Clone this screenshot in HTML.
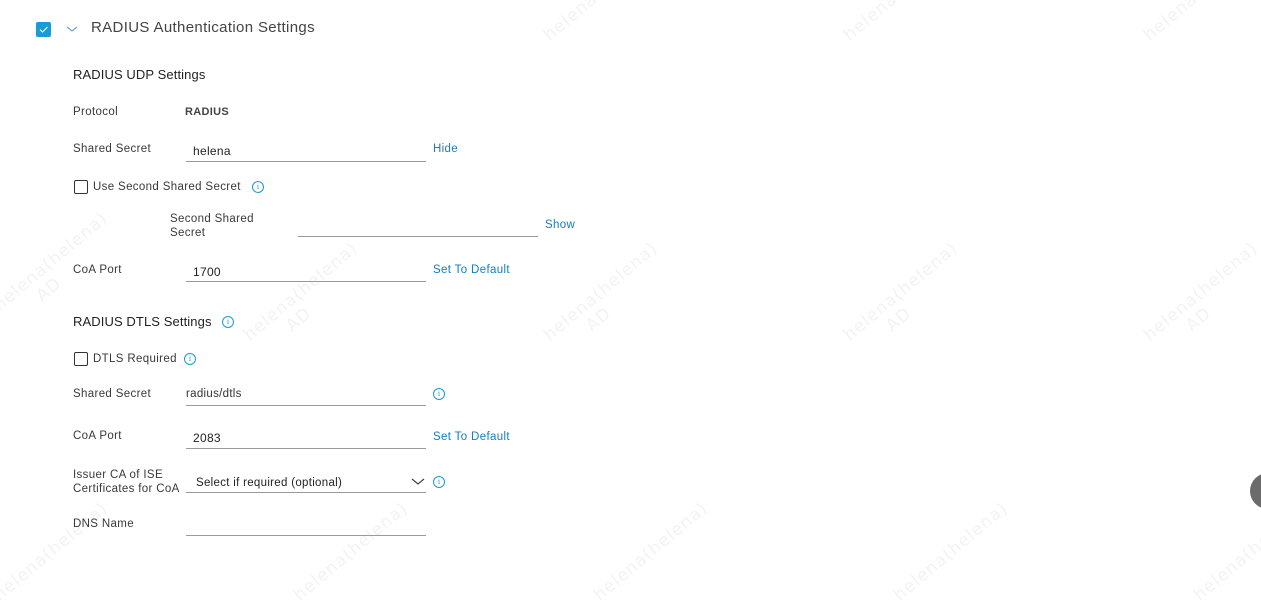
<!DOCTYPE html>
<html><head><style>
body{margin:0;width:1261px;height:552px;background:#fff;position:relative;overflow:hidden;font-family:"Liberation Sans",Arial,sans-serif;color:#39393b}
#w{position:absolute;left:0;top:1px;width:1261px;height:552px}
.a{position:absolute;white-space:nowrap}
.lbl{font-size:11.5px;color:#39393b;letter-spacing:.35px}
.ln{position:absolute;height:1px;background:#9a9a9a}
.lnk{font-size:11.5px;color:#0d7ec7;letter-spacing:.35px}
.cb{position:absolute;width:12px;height:12px;border:1px solid #333;border-radius:2px}
.info{position:absolute;width:10px;height:10px;border:1px solid #1a9bd7;border-radius:50%;color:#1a9bd7;font-size:8px;line-height:10px;text-align:center;font-family:"Liberation Serif",serif}
.wm{position:absolute;color:#f3f3f3;font-size:17px;transform:rotate(-40deg);transform-origin:left top;letter-spacing:1px;font-family:"DejaVu Sans",sans-serif;white-space:nowrap}
</style></head><body>
<div class="wm" style="left:-10px;top:300px">helena(helena)<br>&nbsp;&nbsp;&nbsp;&nbsp;&nbsp;&nbsp;AD</div>
<div class="wm" style="left:240px;top:330px">helena(helena)<br>&nbsp;&nbsp;&nbsp;&nbsp;&nbsp;&nbsp;AD</div>
<div class="wm" style="left:540px;top:330px">helena(helena)<br>&nbsp;&nbsp;&nbsp;&nbsp;&nbsp;&nbsp;AD</div>
<div class="wm" style="left:840px;top:330px">helena(helena)<br>&nbsp;&nbsp;&nbsp;&nbsp;&nbsp;&nbsp;AD</div>
<div class="wm" style="left:1140px;top:330px">helena(helena)<br>&nbsp;&nbsp;&nbsp;&nbsp;&nbsp;&nbsp;AD</div>
<div class="wm" style="left:540px;top:30px">helena(helena)</div>
<div class="wm" style="left:840px;top:30px">helena(helena)</div>
<div class="wm" style="left:1140px;top:30px">helena(helena)</div>
<div class="wm" style="left:-10px;top:590px">helena(helena)</div>
<div class="wm" style="left:290px;top:590px">helena(helena)</div>
<div class="wm" style="left:590px;top:590px">helena(helena)</div>
<div class="wm" style="left:890px;top:590px">helena(helena)</div>
<div class="wm" style="left:1190px;top:590px">helena(helena)</div>
<div id="w">
<div class="a" style="left:36px;top:21px;width:15px;height:15px;background:#1a9bd7;border-radius:2px"></div>
<svg class="a" style="left:36px;top:21px" width="15" height="15"><path d="M4 7.5l2.5 2.5 5-5" stroke="#fff" stroke-width="1" fill="none"/></svg>
<svg class="a" style="left:66px;top:23px" width="12" height="10"><path d="M1 3l5 4 5-4" stroke="#5a8fc0" stroke-width="1" fill="none"/></svg>
<div class="a" style="left:91px;top:18px;font-size:15px;color:#444;letter-spacing:.35px">RADIUS Authentication Settings</div>

<div class="a" style="left:73px;top:66px;font-size:13px;color:#222;letter-spacing:.1px">RADIUS UDP Settings</div>
<div class="a lbl" style="left:73px;top:105px">Protocol</div>
<div class="a" style="left:185px;top:105px;font-size:11px;font-weight:bold;color:#444;letter-spacing:.3px">RADIUS</div>

<div class="a lbl" style="left:73px;top:142px">Shared Secret</div>
<div class="a" style="left:193px;top:143px;font-size:12px;color:#222;letter-spacing:.3px">helena</div>
<div class="ln" style="left:186px;top:160px;width:240px"></div>
<div class="a lnk" style="left:433px;top:142px;color:#1f7ab0">Hide</div>

<div class="cb" style="left:74px;top:179px"></div>
<div class="a lbl" style="left:93px;top:180px">Use Second Shared Secret</div>
<div class="info" style="left:252px;top:180px">i</div>

<div class="a lbl" style="left:170px;top:211px;line-height:14px">Second Shared<br>Secret</div>
<div class="ln" style="left:298px;top:235px;width:240px"></div>
<div class="a lnk" style="left:545px;top:218px">Show</div>

<div class="a lbl" style="left:73px;top:263px">CoA Port</div>
<div class="a" style="left:193px;top:264px;font-size:12px;color:#222;letter-spacing:.3px">1700</div>
<div class="ln" style="left:186px;top:280px;width:240px"></div>
<div class="a lnk" style="left:433px;top:263px">Set To Default</div>

<div class="a" style="left:73px;top:313px;font-size:13px;color:#222;letter-spacing:.1px">RADIUS DTLS Settings</div>
<div class="info" style="left:222px;top:315px">i</div>

<div class="cb" style="left:74px;top:351px"></div>
<div class="a lbl" style="left:93px;top:352px">DTLS Required</div>
<div class="info" style="left:184px;top:352px">i</div>

<div class="a lbl" style="left:73px;top:387px">Shared Secret</div>
<div class="a" style="left:186px;top:387px;font-size:11.5px;color:#333;letter-spacing:.3px">radius/dtls</div>
<div class="ln" style="left:186px;top:404px;width:240px"></div>
<div class="info" style="left:433px;top:387px">i</div>

<div class="a lbl" style="left:73px;top:429px">CoA Port</div>
<div class="a" style="left:193px;top:430px;font-size:12px;color:#222;letter-spacing:.3px">2083</div>
<div class="ln" style="left:186px;top:447px;width:240px"></div>
<div class="a lnk" style="left:433px;top:430px">Set To Default</div>

<div class="a lbl" style="left:73px;top:467px;line-height:14px">Issuer CA of ISE<br>Certificates for CoA</div>
<div class="a" style="left:196px;top:476px;font-size:11.5px;color:#222;letter-spacing:.3px">Select if required (optional)</div>
<svg class="a" style="left:411px;top:476px" width="14" height="10"><path d="M1 2l6 5 6-5" stroke="#444" stroke-width="1.2" fill="none"/></svg>
<div class="ln" style="left:186px;top:491px;width:240px"></div>
<div class="info" style="left:433px;top:475px">i</div>

<div class="a lbl" style="left:73px;top:517px">DNS Name</div>
<div class="ln" style="left:186px;top:534px;width:240px"></div>
</div>
<div class="a" style="left:1250px;top:473px;width:36px;height:36px;border-radius:50%;background:#6b6b6b"></div>
</body></html>
